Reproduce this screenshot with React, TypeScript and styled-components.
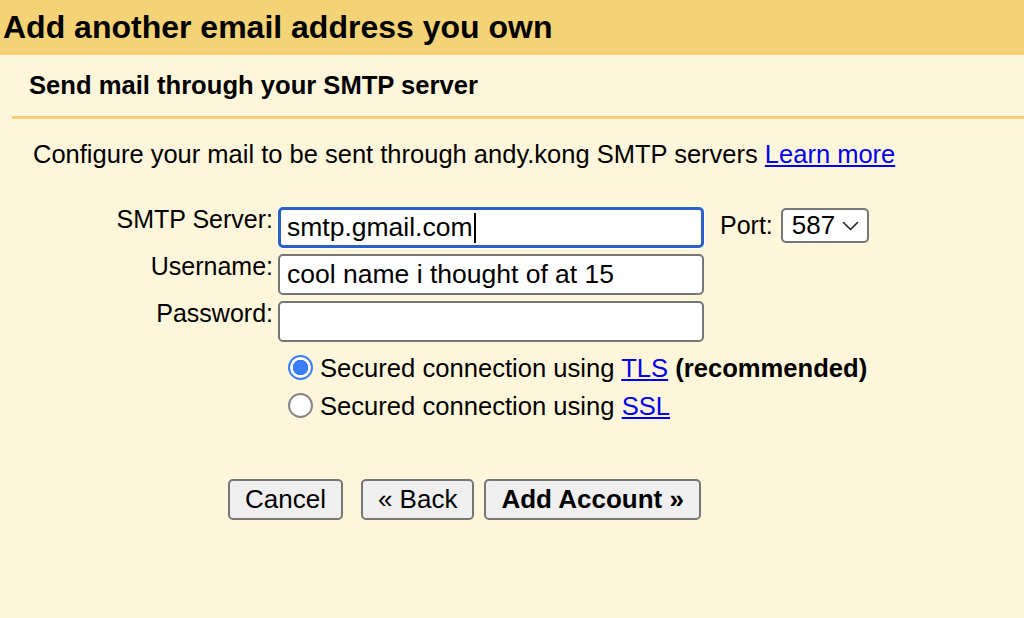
import React from 'react';
import styled, { createGlobalStyle } from 'styled-components';

const GlobalStyle = createGlobalStyle`
  html, body {
    margin: 0;
    padding: 0;
    background: #fef6da;
  }
  body {
    font-family: "Liberation Sans", Arial, sans-serif;
    color: #000;
  }
`;

const Page = styled.div`
  min-height: 100vh;
  background: #fef6da;
`;

const TitleBar = styled.h1`
  display: flex;
  align-items: center;
  height: 55px;
  margin: 0;
  padding-left: 3px;
  background: #f4d276;
  font-size: 32px;
  font-weight: bold;
`;

const SubTitle = styled.h2`
  display: flex;
  align-items: center;
  height: 61px;
  margin: 0;
  padding-left: 29px;
  font-size: 25.6px;
  font-weight: bold;
`;

const Divider = styled.div`
  height: 3px;
  margin-left: 12px;
  background: #f4d276;
`;

const Intro = styled.p`
  margin: 20px 0 0;
  padding-left: 33px;
  font-size: 25.5px;
  line-height: 30px;
`;

const Link = styled.a`
  color: #0000ee;
  text-decoration: underline;
  cursor: pointer;
`;

const FormGrid = styled.div`
  display: grid;
  grid-template-columns: 273px 426px auto;
  column-gap: 5px;
  row-gap: 6px;
  margin-top: 38px;
`;

const Label = styled.label`
  align-self: start;
  justify-self: end;
  font-size: 25px;
  line-height: 24px;
`;

const FieldBox = styled.div<{ $focused?: boolean }>`
  box-sizing: border-box;
  display: flex;
  align-items: center;
  height: 41px;
  padding-left: ${(p) => (p.$focused ? '6px' : '7px')};
  border: ${(p) => (p.$focused ? '3px solid #2c60c8' : '2px solid #767676')};
  border-radius: 5px;
  background: #fff;
  box-shadow: ${(p) => (p.$focused ? '0 0 0 1px #ffffff' : 'none')};
  font-size: 26.5px;
  white-space: nowrap;
  overflow: hidden;
`;

const Caret = styled.span`
  display: inline-block;
  width: 2px;
  height: 30px;
  margin-left: 1px;
  background: #000;
`;

const PortGroup = styled.div`
  display: flex;
  align-items: center;
  align-self: start;
  gap: 8px;
  margin-top: 1px;
  padding-left: 11px;
  font-size: 25px;
`;

const SelectBox = styled.div`
  box-sizing: border-box;
  display: flex;
  align-items: center;
  justify-content: space-between;
  width: 88px;
  height: 35px;
  padding: 0 8px 0 9px;
  border: 2px solid #767676;
  border-radius: 5px;
  background: #fff;
  font-size: 26px;
`;

const RadioGroup = styled.div`
  grid-column: 2 / span 2;
  padding-left: 10px;
  font-size: 25.6px;
`;

const RadioRow = styled.label`
  display: flex;
  align-items: center;
  gap: 7px;
  height: 38px;
  white-space: nowrap;
  & > span {
    padding-top: 3px;
  }
`;

const RadioInput = styled.input`
  appearance: none;
  box-sizing: border-box;
  width: 25px;
  height: 25px;
  margin: 0;
  border-radius: 50%;
  border: 2px solid #858585;
  background: #fff;
  &:checked {
    border: 2px solid #3a7df6;
    background: radial-gradient(circle, #3a7df6 0 7.5px, #ffffff 8px);
  }
`;

const ButtonRow = styled.div`
  display: flex;
  gap: 10px;
  margin-top: 55px;
  padding-left: 228px;
  & > :first-child {
    margin-right: 8px;
  }
`;

const Button = styled.button<{ $primary?: boolean }>`
  box-sizing: border-box;
  height: 41px;
  padding: 0 15px;
  border: 2px solid #767676;
  border-radius: 5px;
  background: #efefef;
  font-family: "Liberation Sans", Arial, sans-serif;
  font-size: 26px;
  font-weight: ${(p) => (p.$primary ? 'bold' : 'normal')};
  color: #000;
  cursor: pointer;
`;

function Chevron() {
  return (
    <svg width="17" height="10" viewBox="0 0 17 10" fill="none">
      <path d="M1.5 1.5 L8.5 8.5 L15.5 1.5" stroke="#222" strokeWidth="1.6" strokeLinecap="round" strokeLinejoin="round" />
    </svg>
  );
}

export default function App() {
  return (
    <Page>
      <GlobalStyle />
      <TitleBar>Add another email address you own</TitleBar>
      <SubTitle>Send mail through your SMTP server</SubTitle>
      <Divider />
      <Intro>
        Configure your mail to be sent through andy.kong SMTP servers <Link>Learn more</Link>
      </Intro>
      <FormGrid>
        <Label>SMTP Server:</Label>
        <FieldBox $focused>
          smtp.gmail.com
          <Caret />
        </FieldBox>
        <PortGroup>
          <span>Port:</span>
          <SelectBox>
            <span>587</span>
            <Chevron />
          </SelectBox>
        </PortGroup>

        <Label>Username:</Label>
        <FieldBox>cool name i thought of at 15</FieldBox>
        <div />

        <Label>Password:</Label>
        <FieldBox />
        <div />

        <div />
        <RadioGroup>
          <RadioRow>
            <RadioInput type="radio" name="security" defaultChecked />
            <span>
              Secured connection using <Link>TLS</Link> <b>(recommended)</b>
            </span>
          </RadioRow>
          <RadioRow>
            <RadioInput type="radio" name="security" />
            <span>
              Secured connection using <Link>SSL</Link>
            </span>
          </RadioRow>
        </RadioGroup>
      </FormGrid>
      <ButtonRow>
        <Button type="button">Cancel</Button>
        <Button type="button">« Back</Button>
        <Button type="button" $primary>
          Add Account »
        </Button>
      </ButtonRow>
    </Page>
  );
}
